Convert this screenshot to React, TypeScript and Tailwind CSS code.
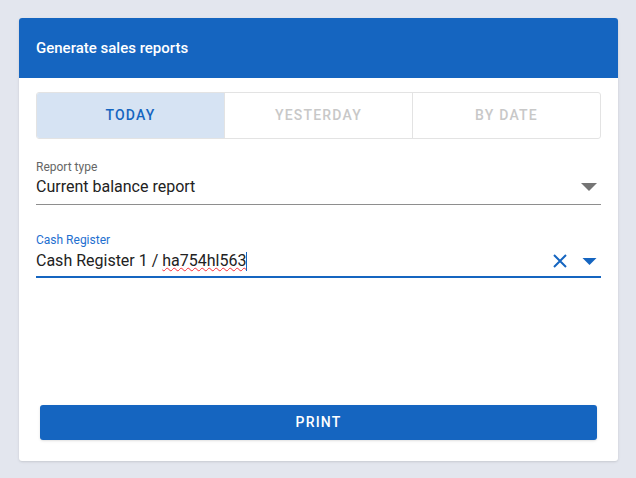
export default function App() {
  return (
    <div className="min-h-[478px] bg-[#e3e6ee] pt-[18px] pl-[19px] pr-[18px] pb-[17px]" style={{ fontFamily: "Roboto, sans-serif" }}>
      <div className="bg-white rounded-[3px] overflow-hidden shadow-sm h-[443px] flex flex-col">
        <div className="bg-[#1565c0] h-[60px] flex items-center px-[17px] text-white text-[15px] font-medium">
          Generate sales reports
        </div>
        <div className="px-[17px] pt-[14px] flex flex-col flex-1">
          <div className="flex h-[47px] border border-[#e3e3e3] rounded-[3px] overflow-hidden text-[14px] font-medium tracking-[1.2px]">
            <div className="flex-1 bg-[#d6e3f3] text-[#1565c0] flex items-center justify-center">TODAY</div>
            <div className="flex-1 border-l border-[#e3e3e3] text-[#c8c8c8] flex items-center justify-center">YESTERDAY</div>
            <div className="flex-1 border-l border-[#e3e3e3] text-[#c8c8c8] flex items-center justify-center">BY DATE</div>
          </div>
          <div className="mt-[21px] border-b border-[#8e8e8e] pb-[7px]">
            <div className="text-[12px] text-[#666] leading-[14px]">Report type</div>
            <div className="flex items-center justify-between mt-[3px]">
              <span className="text-[16px] text-[#222] leading-[20px]">Current balance report</span>
              <svg width="16" height="8" viewBox="0 0 16 8" className="mr-[4px]"><path d="M0 0h16L8 8z" fill="#757575" /></svg>
            </div>
          </div>
          <div className="mt-[28px] border-b-2 border-[#1565c0] pb-[5px]">
            <div className="text-[12px] text-[#1e6fd0] leading-[14px]">Cash Register</div>
            <div className="flex items-center justify-between mt-[4px]">
              <span className="text-[16px] text-[#222] leading-[20px]">
                Cash Register 1 / <span className="underline decoration-wavy decoration-red-500 decoration-1">ha754hl563</span>
                <span className="inline-block w-px h-[19px] bg-[#1565c0] align-middle" />
              </span>
              <div className="flex items-center gap-[14px] mr-[4px]">
                <svg width="16" height="16" viewBox="0 0 16 16"><path d="M2 2l12 12M14 2L2 14" stroke="#1565c0" strokeWidth="2" /></svg>
                <svg width="15" height="7" viewBox="0 0 16 8"><path d="M0 0h16L8 8z" fill="#1565c0" /></svg>
              </div>
            </div>
          </div>
          <div className="flex-1" />
          <button className="mx-[4px] mb-[21px] h-[35px] rounded-[3px] bg-[#1565c0] text-white text-[14px] font-medium tracking-[1.2px] shadow">
            PRINT
          </button>
        </div>
      </div>
    </div>
  );
}
